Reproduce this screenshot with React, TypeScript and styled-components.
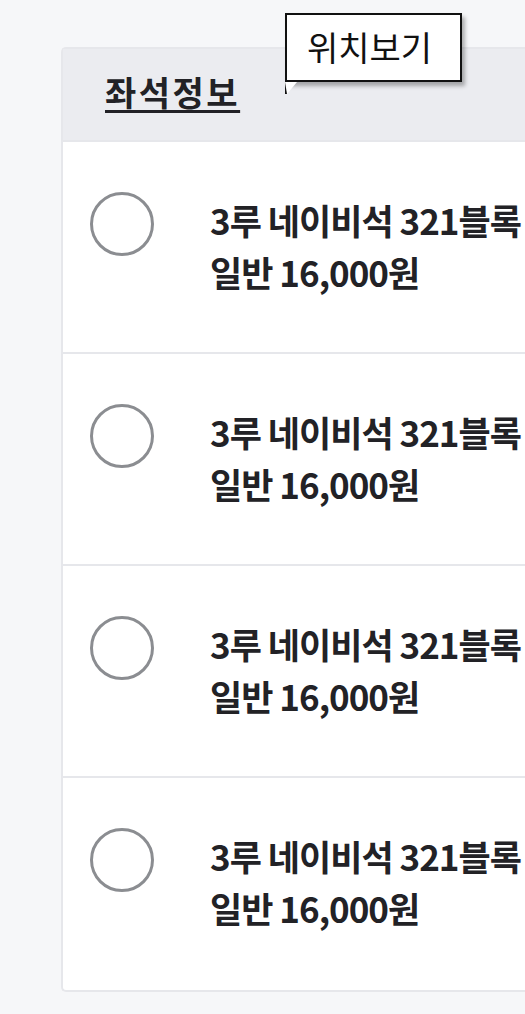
import React from 'react';
import styled, { createGlobalStyle } from 'styled-components';

const GlobalStyle = createGlobalStyle`
  html, body {
    margin: 0;
    padding: 0;
    background: #f6f7f9;
    overflow: hidden;
  }
  body {
    font-family: "Noto Sans CJK KR", "Noto Sans", sans-serif;
    color: #222226;
  }
`;

const seats = [
    { name: '3루 네이비석 321블록', price: '일반 16,000원' },
    { name: '3루 네이비석 321블록', price: '일반 16,000원' },
    { name: '3루 네이비석 321블록', price: '일반 16,000원' },
    { name: '3루 네이비석 321블록', price: '일반 16,000원' },
];

const App: React.FC = () => {
    return (
        <>
            <GlobalStyle />
            <Page>
                <Card>
                    <Header>
                        <Title>좌석정보</Title>
                        <Bubble>위치보기</Bubble>
                    </Header>
                    {seats.map((s, i) => (
                        <Row key={i}>
                            <Radio />
                            <SeatText>
                                <div>{s.name}</div>
                                <div>{s.price}</div>
                            </SeatText>
                        </Row>
                    ))}
                </Card>
            </Page>
        </>
    );
};

const Page = styled.div`
  width: 525px;
  height: 1014px;
  padding: 47px 0 0 61px;
  box-sizing: border-box;
  overflow: hidden;
`;

const Card = styled.div`
  width: 600px;
  background: #fff;
  border: 2px solid #e6e7eb;
  border-right: none;
  border-radius: 5px 0 0 5px;
`;

const Header = styled.div`
  position: relative;
  height: 91px;
  background: #ebecf0;
  padding-left: 42px;
  display: flex;
  align-items: flex-end;
  border-bottom: 2px solid #e6e7eb;
`;

const Title = styled.h2`
  margin: 0 0 30px;
  font-size: 34px;
  font-weight: 700;
  line-height: 1.1;
  letter-spacing: 2.5px;
  text-decoration: underline;
  text-decoration-thickness: 3px;
  text-underline-offset: 4px;
  color: #222226;
`;

const Bubble = styled.div`
  position: absolute;
  left: 222px;
  top: -36px;
  width: 177px;
  height: 69px;
  box-sizing: border-box;
  border: 2px solid #111;
  background: #fff;
  box-shadow: 3px 4px 4px rgba(0, 0, 0, 0.3);
  font-size: 34px;
  font-weight: 400;
  line-height: 64px;
  padding-left: 20px;
  color: #111;

  &::after {
    content: '';
    position: absolute;
    left: -2px;
    bottom: -14px;
    width: 0;
    height: 0;
    border-left: 2px solid #111;
    border-right: 10px solid transparent;
    border-top: 12px solid #fff;
  }
`;

const Row = styled.div`
  display: flex;
  align-items: flex-start;
  height: 212px;
  box-sizing: border-box;
  padding: 50px 0 0 27px;
  border-bottom: 2px solid #e6e7eb;

  &:last-child {
    border-bottom: none;
  }
`;

const Radio = styled.span`
  flex: none;
  width: 64px;
  height: 64px;
  box-sizing: border-box;
  border: 3px solid #8b8d91;
  border-radius: 50%;
  margin-right: 56px;
`;

const SeatText = styled.div`
  font-size: 35px;
  font-weight: 700;
  line-height: 52px;
  letter-spacing: -1px;
  white-space: nowrap;
  margin-top: 2px;
  color: #222226;
`;

export default App;
